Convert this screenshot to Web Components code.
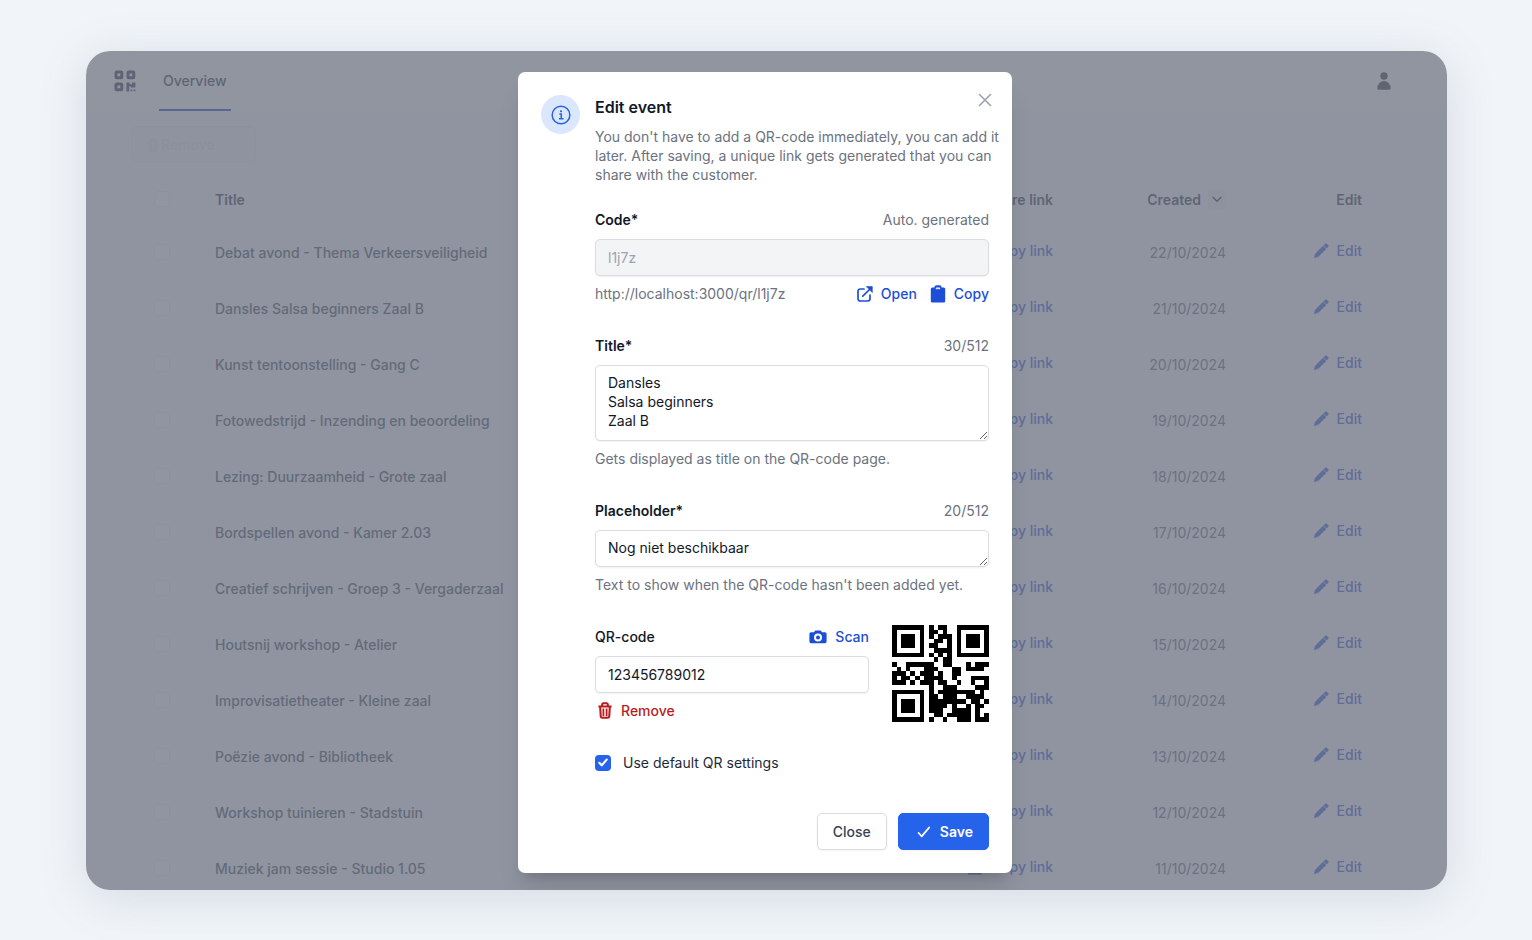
<!DOCTYPE html>
<html lang="en">
<head>
<meta charset="utf-8">
<title>Edit event</title>
<style>
  body { margin: 0; min-height: 100vh; background: #f1f5f9; font: 14px/19px Inter, "Liberation Sans", sans-serif; color: #111827; }
</style>
</head>
<body>
<app-shell>
  <app-header></app-header>
  <event-table></event-table>
  <edit-dialog slot="dialog"></edit-dialog>
</app-shell>
<script>
const ICONS = {
  info: ['0 0 24 24', '<g fill="none" stroke="currentColor" stroke-width="1.8"><circle cx="12" cy="12" r="10.6"/><path d="M10 10.800h2.300v5.500M9.600 16.600h5.400" stroke-width="1.800"/></g><circle cx="12" cy="7.600" r="1.300" fill="currentColor"/>'],
  close: ['0 0 14 14', '<path d="M1.5 1.5l11 11M12.5 1.5l-11 11" fill="none" stroke="currentColor" stroke-width="1.6" stroke-linecap="round"/>'],
  open: ['0 0 16 16', '<path d="M7 3H3.2A2.2 2.2 0 0 0 1 5.200v7.600A2.200 2.200 0 0 0 3.200 15h7.600a2.200 2.200 0 0 0 2.200-2.200V9M5.800 10.200L13 3" fill="none" stroke="currentColor" stroke-width="1.700" stroke-linecap="round"/><path d="M9.300.6h6v6z" fill="currentColor" stroke="currentColor" stroke-width=".6" stroke-linejoin="round"/>'],
  clipboard: ['0 0 16 18', '<path d="M2.300 2.500h11.400A1.500 1.500 0 0 1 15.200 4v12a1.500 1.500 0 0 1-1.500 1.500H2.300A1.500 1.500 0 0 1 .8 16V4a1.500 1.500 0 0 1 1.500-1.500z" fill="currentColor"/><path d="M5.200 4V2.600A1.500 1.500 0 0 1 6.700 1.100h2.600a1.500 1.500 0 0 1 1.500 1.500V4" fill="none" stroke="currentColor" stroke-width="1.600"/><path d="M5.800 3h4.400v1.200H5.800z" fill="#dbe4fb"/>'],
  camera: ['0 0 18 14', '<path fill-rule="evenodd" fill="currentColor" d="M2 2.200h3L6 .8A1 1 0 0 1 6.800.4h4.400a1 1 0 0 1 .8.4l1 1.400h3A1.600 1.600 0 0 1 17.600 3.800v7.800A1.600 1.600 0 0 1 16 13.200H2A1.600 1.600 0 0 1 .4 11.600V3.800A1.600 1.600 0 0 1 2 2.200zM9 3.600a4 4 0 1 0 0 8 4 4 0 0 0 0-8zm0 2a2 2 0 1 1 0 4 2 2 0 0 1 0-4z"/>'],
  trash: ['0 0 16 18', '<path d="M1 4.800h14M5 4.200V2.600A1.200 1.200 0 0 1 6.200 1.400h3.600A1.200 1.200 0 0 1 11 2.600v1.600M2.900 5l.6 10.400a1.500 1.500 0 0 0 1.500 1.300h6a1.500 1.500 0 0 0 1.500-1.300L13.100 5" fill="none" stroke="currentColor" stroke-width="2.200"/><path d="M6.300 7v8M9.700 7v8" stroke="currentColor" stroke-width="1.900"/>'],
  check: ['0 0 14 12', '<path d="M1.500 6.800l3.200 3.600L12.300 1.400" fill="none" stroke="currentColor" stroke-width="1.700" stroke-linecap="round" stroke-linejoin="round"/>'],
  tick: ['0 0 14 12', '<path d="M1.800 6.400l3.400 3.600L12.200 2" fill="none" stroke="currentColor" stroke-width="3" stroke-linecap="round" stroke-linejoin="round"/>'],
  pencil: ['0 0 16 16', '<path d="M1.500 14.500l.9-3.600L10 3.300l2.700 2.700L5.100 13.600zM10.900 2.400l1-1a1.500 1.500 0 0 1 2.100 0l.6.6a1.500 1.500 0 0 1 0 2.100l-1 1z" fill="currentColor" stroke="currentColor" stroke-width=".8" stroke-linejoin="round"/>'],
  user: ['0 0 14 18', '<circle cx="7" cy="4" r="3.700" fill="currentColor"/><path d="M.3 16.300a6.700 7.300 0 0 1 13.400 0c0 .9-.6 1.400-1.400 1.400H1.700c-.8 0-1.400-.5-1.400-1.400z" fill="currentColor"/>'],
  chevron: ['0 0 10 7', '<path d="M1 1.200l4 4 4-4" fill="none" stroke="currentColor" stroke-width="1.500" stroke-linecap="round" stroke-linejoin="round"/>'],
  logo: ['0 0 22 22', '<g fill="none" stroke="currentColor" stroke-width="3"><rect x="2" y="2" width="5.800" height="5.800" rx=".8"/><rect x="14" y="2" width="5.800" height="5.800" rx=".8"/><rect x="2" y="14" width="5.800" height="5.800" rx=".8"/></g><path d="M12.400 12.400h3.200v1.800h2.400v-1.800h3.400v5h-4.600v-1.200h-1.600v5.200h-2.800zM16.600 19.600h1.700v1.700h-1.700zM19.700 19.600h1.700v1.700h-1.700z" fill="currentColor"/>']
};

const define = (name, html, setup) => {
  const template = document.createElement('template');
  template.innerHTML = html;
  customElements.define(name, class extends HTMLElement {
    constructor() {
      super();
      this.attachShadow({ mode: 'open' }).append(template.content.cloneNode(true));
    }
    connectedCallback() { if (setup) setup(this, this.shadowRoot); }
  });
};

define('ui-icon', `<style>
  :host { display: inline-flex; flex: none; width: 16px; height: 16px; }
  svg { width: 100%; height: 100%; display: block; }
</style><svg aria-hidden="true"></svg>`, (el, root) => {
  const [box, shape] = ICONS[el.getAttribute('name')];
  const svg = root.querySelector('svg');
  svg.setAttribute('viewBox', box);
  svg.innerHTML = shape;
});

define('icon-link', `<style>
  :host { display: inline-block; color: #1d4ed8; }
  a { display: flex; align-items: center; gap: 8px; color: inherit; font-weight: 500; text-decoration: none; }
  [name="clipboard"] { height: 18px; }
  [name="trash"] { height: 17px; }
  [name="camera"] { width: 18px; height: 14px; }
</style><a href="#"><slot></slot></a>`, (el, root) => {
  const icon = document.createElement('ui-icon');
  icon.setAttribute('name', el.getAttribute('icon'));
  root.querySelector('a').prepend(icon);
});

define('qr-image', `<style>
  :host { display: block; width: 97px; height: 97px; }
  svg { display: block; width: 100%; height: 100%; }
</style><svg viewBox="0 0 21 21" role="img" aria-label="QR code" shape-rendering="crispEdges"><path fill="#000"/></svg>`, (el, root) => {
  const rows = [
    '111111101011001111111',
    '100000101101001000001',
    '101110101011101011101',
    '101110100110101011101',
    '101110101100101011101',
    '100000100111101000001',
    '111111101010101111111',
    '000000000101100000000',
    '100111111001100010111',
    '010100011100011011110',
    '111010111010011000000',
    '101101011110010001111',
    '111010111011001001001',
    '000000001001110000111',
    '111111101011111111010',
    '100000101101110011110',
    '101110101111111101101',
    '101110101111010010110',
    '101110101110011110100',
    '100000100110111110101',
    '111111101001001110111'
  ];
  let d = '';
  rows.forEach((row, y) => [...row].forEach((bit, x) => { if (bit === '1') d += `M${x} ${y}h1v1h-1z`; }));
  root.querySelector('path').setAttribute('d', d);
});

define('app-shell', `<style>
  :host { display: block; padding: 51px 85px 50px 86px; }
  .window { position: relative; height: calc(100vh - 101px); overflow: hidden; border-radius: 24px; background: #fbfbfd; }
  .frame { border-radius: 24px; box-shadow: 0 8px 48px rgb(100 116 139 / .2); }
  .overlay { position: absolute; inset: 0; display: flex; justify-content: center; align-items: flex-start; padding: 21px 3px 16px 0; background: rgb(107 114 128 / .75); }
</style><div class="frame"><div class="window"><slot></slot><div class="overlay"><slot name="dialog"></slot></div></div></div>`);

define('app-header', `<style>
  :host { display: flex; align-items: center; height: 60px; padding: 0 56px 0 28px; gap: 23px; background: #fff; color: #374151; }
  .logo { width: 22px; height: 22px; }
  nav { flex: 1; align-self: stretch; display: flex; }
  a { display: flex; align-items: center; padding: 0 4px; color: inherit; font-weight: 500; text-decoration: none; border-bottom: 2px solid #2546c8; }
  button { display: flex; border: 0; padding: 0; background: none; color: inherit; }
  .user { width: 14px; height: 18px; }
</style><ui-icon class="logo" name="logo"></ui-icon><nav><a href="#">Overview</a></nav><button aria-label="Account"><ui-icon class="user" name="user"></ui-icon></button>`);

define('event-table', `<style>
  :host { display: block; padding: 15px 45px 0; color: #4b5563; }
  .remove { display: flex; align-items: center; gap: 2px; height: 37px; width: 125px; padding: 0 15px; border: 1px solid #eef0f3; border-radius: 6px; background: #f6f8fb; color: #e6e9ee; font: inherit; font-weight: 500; }
  .remove ui-icon { width: 12px; height: 14px; }
  table { width: 100%; margin-top: 11px; table-layout: fixed; border-collapse: collapse; }
  th, td { box-sizing: border-box; padding: 0; height: 56px; text-align: right; font-weight: 500; white-space: nowrap; }
  th { height: 50px; font-weight: 600; color: #374151; }
  th:nth-child(2), td:nth-child(2) { text-align: left; }
  th:nth-child(1), td:nth-child(1) { width: 84px; text-align: left; padding-left: 23px; }
  th:nth-child(3) { width: 200px; }
  th:nth-child(4) { width: 173px; }
  td:nth-child(4) { color: #6b7280; font-weight: 400; }
  th:nth-child(5), td:nth-child(5) { width: 176px; padding-right: 40px; }
  input { appearance: none; display: block; box-sizing: border-box; width: 16px; height: 16px; margin: 0; border: 1px solid #eef0f3; border-radius: 4px; background: #fdfdfe; }
  .sort { display: inline-flex; align-items: center; gap: 7px; }
  .sort span { display: flex; padding: 6px 4px; border-radius: 4px; background: #f3f4f6; }
  .sort ui-icon { width: 10px; height: 7px; }
  icon-link { color: #3b5bdb; }
</style>
<button class="remove" disabled><ui-icon name="trash"></ui-icon>Remove</button>
<table><thead><tr><th><input type="checkbox" aria-label="Select all"></th><th>Title</th><th>Share link</th><th><span class="sort">Created <span><ui-icon name="chevron"></ui-icon></span></span></th><th>Edit</th></tr></thead><tbody></tbody></table>`, (el, root) => {
  const titles = ['Debat avond - Thema Verkeersveiligheid', 'Dansles Salsa beginners Zaal B', 'Kunst tentoonstelling - Gang C', 'Fotowedstrijd - Inzending en beoordeling', 'Lezing: Duurzaamheid - Grote zaal', 'Bordspellen avond - Kamer 2.03', 'Creatief schrijven - Groep 3 - Vergaderzaal', 'Houtsnij workshop - Atelier', 'Improvisatietheater - Kleine zaal', 'Poëzie avond - Bibliotheek', 'Workshop tuinieren - Stadstuin', 'Muziek jam sessie - Studio 1.05'];
  root.querySelector('tbody').innerHTML = titles.map((title, i) => `<tr><td><input type="checkbox" aria-label="${title}"></td><td>${title}</td><td><icon-link icon="clipboard">Copy link</icon-link></td><td>${22 - i}/10/2024</td><td><icon-link icon="pencil">Edit</icon-link></td></tr>`).join('');
});

define('form-field', `<style>
  :host { display: block; }
  .head, .foot { display: flex; justify-content: space-between; color: #6b7280; }
  label { color: #111827; font-weight: 500; }
  :host([required]) label { font-weight: 600; }
  input, textarea { display: block; box-sizing: border-box; width: 100%; height: 37px; margin: 10px 0 8px; padding: 8px 12px; border: 1px solid #d9dce1; border-radius: 5px; background: #fff; color: #111827; font: inherit; box-shadow: 0 1px 2px rgb(0 0 0 / .06); outline: 0; }
  textarea { padding-top: 7px; }
  textarea[rows="3"] { height: 76px; }
  :disabled { background: #f3f4f6; color: #9ca3af; }
</style><div class="head"><label for="control"></label><slot name="aside"></slot></div><div id="control"></div><div class="foot"><slot></slot></div>`, (el, root) => {
  const rows = el.getAttribute('rows');
  const control = document.createElement(rows ? 'textarea' : 'input');
  control.id = 'control';
  if (rows) control.rows = rows;
  control.value = el.getAttribute('value');
  control.disabled = el.hasAttribute('disabled');
  root.querySelector('#control').replaceWith(control);
  root.querySelector('label').textContent = el.getAttribute('label') + (el.hasAttribute('required') ? '*' : '');
});

define('ui-button', `<style>
  :host { display: block; }
  button { display: flex; align-items: center; gap: 9px; height: 37px; padding: 0 15px; border: 1px solid #d9dce1; border-radius: 5px; background: #fff; color: #374151; font: inherit; font-weight: 500; box-shadow: 0 1px 2px rgb(0 0 0 / .05); }
  :host([primary]) button { border-color: #2563eb; background: #2563eb; color: #fff; font-weight: 600; padding-left: 18px; }
</style><button type="button"><slot></slot></button>`);

define('edit-dialog', `<style>
  :host { display: block; box-sizing: border-box; width: 494px; max-width: 100%; padding: 23px; border-radius: 7px; background: #fff; box-shadow: 0 20px 25px -5px rgb(0 0 0 / .12), 0 8px 10px -6px rgb(0 0 0 / .12); }
  section { display: grid; grid-template-columns: 39px 1fr; column-gap: 15px; }
  .badge { display: grid; place-items: center; width: 39px; height: 39px; border-radius: 50%; background: #dbe7fd; color: #2563eb; }
  .badge ui-icon { width: 20px; height: 20px; }
  header { display: flex; justify-content: space-between; align-items: flex-start; }
  h2 { margin: 0; font-size: 16px; line-height: 24px; font-weight: 600; }
  .close { display: flex; margin: -2px -3px 0 0; padding: 0; border: 0; background: none; color: #9ca3af; }
  .close ui-icon { width: 14px; height: 14px; }
  p { margin: 8px -12px 26px 0; color: #6b7280; }
  form { display: flex; flex-direction: column; gap: 33px; }
  .links { display: flex; gap: 13px; }
  .qr { display: flex; align-items: center; gap: 23px; }
  .qr form-field { flex: 1; }
  qr-image { margin: -2px 0; }
  .danger { color: #b91c1c; margin-left: 2px; }
  .option { display: flex; align-items: center; gap: 12px; color: #1f2937; }
  .box { display: grid; width: 16px; height: 16px; }
  .box > * { grid-area: 1 / 1; place-self: center; }
  .box input { appearance: none; width: 16px; height: 16px; margin: 0; border-radius: 4px; background: #2563eb; }
  .box ui-icon { width: 10px; height: 9px; color: #fff; pointer-events: none; }
  footer { display: flex; justify-content: flex-end; gap: 11px; margin-top: 41px; }
  .save { width: 14px; height: 12px; }
</style>
<section role="dialog" aria-label="Edit event">
  <div class="badge"><ui-icon name="info"></ui-icon></div>
  <div>
    <header><h2>Edit event</h2><button class="close" aria-label="Dismiss"><ui-icon name="close"></ui-icon></button></header>
    <p>You don't have to add a QR-code immediately, you can add it later. After saving, a unique link gets generated that you can share with the customer.</p>
    <form>
      <form-field label="Code" required disabled value="l1j7z"><span slot="aside">Auto. generated</span><span>http://localhost:3000/qr/l1j7z</span><span class="links"><icon-link icon="open">Open</icon-link><icon-link icon="clipboard">Copy</icon-link></span></form-field>
      <form-field label="Title" required rows="3" value="Dansles&#10;Salsa beginners&#10;Zaal B"><span slot="aside">30/512</span><span>Gets displayed as title on the QR-code page.</span></form-field>
      <form-field label="Placeholder" required rows="1" value="Nog niet beschikbaar"><span slot="aside">20/512</span><span>Text to show when the QR-code hasn't been added yet.</span></form-field>
      <div class="qr">
        <form-field label="QR-code" value="123456789012"><icon-link slot="aside" icon="camera">Scan</icon-link><icon-link class="danger" icon="trash">Remove</icon-link></form-field>
        <qr-image></qr-image>
      </div>
      <label class="option"><span class="box"><input type="checkbox" checked><ui-icon name="tick"></ui-icon></span>Use default QR settings</label>
    </form>
    <footer><ui-button>Close</ui-button><ui-button primary><ui-icon class="save" name="check"></ui-icon>Save</ui-button></footer>
  </div>
</section>`);
</script>
</body>
</html>
